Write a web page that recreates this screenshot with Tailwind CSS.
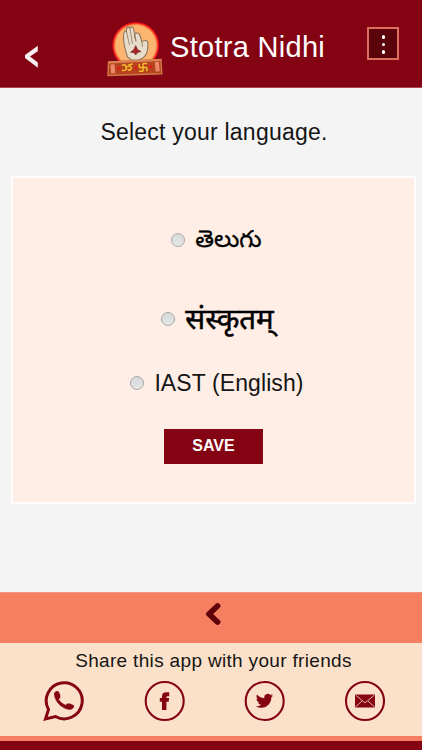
<!DOCTYPE html>
<html lang="en">
<head>
  <meta charset="UTF-8" />
  <meta name="viewport" content="width=device-width, initial-scale=1.0" />
  <title>Stotra Nidhi</title>
  <script src="https://cdn.jsdelivr.net/npm/@tailwindcss/browser@4"></script>
</head>
<body class="h-[750px] overflow-hidden flex flex-col bg-[#f4f4f4] text-[#151515] font-['Liberation_Sans',Arial,sans-serif]">

  <!-- HEADER -->
  <header class="h-[88px] shrink-0 flex items-start bg-[#850414] border-b border-[#a84a54]">
    <button class="mt-[45px] ml-[24px] w-[15px]" aria-label="Back">
      <svg class="block" width="15" height="23" viewBox="0 0 15 23"><path d="M13.8 .8V6.2L6 11.5L13.8 17.5V22.8L1 13V10Z" fill="#f6eff0" /></svg>
    </button>
    <!-- Logo -->
    <svg class="block mt-[20px] ml-[68px] shrink-0" width="58" height="58" viewBox="0 0 58 58">
      <defs>
        <radialGradient id="halo"><stop offset=".84" stop-color="#fbb56e" /><stop offset=".91" stop-color="#f8562f" /><stop offset=".96" stop-color="#ef0716" /><stop offset="1" stop-color="#850414" /></radialGradient>
      </defs>
      <circle cx="28.7" cy="25.5" r="23.8" fill="url(#halo)" />
      <g fill="#e8dccb" stroke="#8c765f" stroke-width="1.1" stroke-linejoin="round">
        <path d="M20.5 37C18.5 31 16.5 24 16.5 17C16.3 11 18.5 10 19.5 12C18.5 7 22 6 23 8.5C24 6 26.5 6.5 26.8 9.5L29 21L27.5 16C27.3 12.2 32 12.1 33 15.5L35 22C37 19.5 41 20 41 24L40.5 30C40 35 36 39.5 31 40L24.5 40Z" />
        <path d="M19.5 12L22.5 25M23 8.5L25.5 24M35 22L35.5 27" fill="none" stroke-width=".8" />
      </g>
      <path d="M28.7 25.5L30.5 29.5L34 31.5L30.5 32.6L28.7 35L27 32.7L23.5 32.3L27 29.4Z" fill="#ad2021" stroke="#6e3937" stroke-width=".7" />
      <path d="M1.5 42L54 39.5L54.8 53.8L1 55.5Z" fill="#b6421e" stroke="#d07a48" stroke-width="1.4" />
      <path d="M1.8 42.6L54 40.1" stroke="#d98355" stroke-width="2" />
      <path d="M3.5 44.4L7.5 44.2L8.3 53.2L4 53.4ZM47.8 42L51.8 41.8L52.8 51.2L48.7 51.4Z" fill="#ed8a6c" />
      <path d="M11.5 46.5l1.7 2-1.7 2-1.7-2zM29 46l1.7 2-1.7 2-1.7-2zM43.5 44.8l1.7 2-1.7 2-1.7-2z" fill="#df1717" />
      <g fill="none" stroke="#f5bc2b" stroke-width="1.5">
        <path d="M15 45.5Q19.5 43.5 18.8 47Q21 50.8 15 50.5M19 47.5Q23 44.5 24.5 48Q23 52 20.8 49M21.5 44.3Q23.5 45.7 25.5 43.5" />
        <path d="M36 43.5V51.5M32 47.6H40M32.3 43.7V47.5M36 43.6H40M39.8 47.5V51.3M36 51.3H32" />
      </g>
    </svg>
    <h1 class="mt-[31px] ml-[5px] text-[29px] leading-[32px] tracking-[0.3px] text-white whitespace-nowrap">Stotra Nidhi</h1>
    <button class="mt-[27px] ml-auto mr-[23px] w-[32px] h-[33px] border-2 border-[#df6f5d] bg-[#5b030b] flex flex-col items-center gap-[4px] pt-[6px] pl-px" aria-label="Menu">
      <span class="size-[3.6px] rounded-full bg-white"></span>
      <span class="size-[3.6px] rounded-full bg-white"></span>
      <span class="size-[3.6px] rounded-full bg-white"></span>
    </button>
  </header>

  <h2 class="mt-[31px] text-center text-[23px] leading-[26px] tracking-[0.22px] pl-[6px]">Select your language.</h2>

  <!-- LANGUAGE FORM -->
  <form class="mt-[31px] ml-[11px] mr-[6px] h-[328px] shrink-0 border-2 border-[#fffdfc] bg-[#ffeee6] flex flex-col items-center">
    <label class="mt-[42px] h-[40px] pl-[6px] flex items-center gap-[10px]">
      <span class="size-[14px] rounded-full border border-[#a9a9a9] bg-linear-to-b from-[#d6d9da] to-[#e6e7e7]"></span>
      <span class="pt-[5px] text-[24px] leading-[40px] text-black [-webkit-text-stroke:0.3px_black] font-['Noto_Sans_Telugu','Noto_Sans',sans-serif]">తెలుగు</span>
    </label>
    <label class="mt-[39px] h-[40px] pl-[8px] flex items-center gap-[10px]">
      <span class="size-[14px] rounded-full border border-[#a9a9a9] bg-linear-to-b from-[#d6d9da] to-[#e6e7e7]"></span>
      <span class="pt-[5px] text-[29.5px] leading-[40px] text-black [-webkit-text-stroke:0.5px_black] font-['Noto_Sans_Devanagari','Noto_Sans',sans-serif]">संस्कृतम्</span>
    </label>
    <label class="mt-[24px] h-[40px] pl-[7px] flex items-center gap-[10px]">
      <span class="size-[14px] rounded-full border border-[#a9a9a9] bg-linear-to-b from-[#d6d9da] to-[#e6e7e7]"></span>
      <span class="text-[23px] leading-[26px] tracking-[0.1px]">IAST (English)</span>
    </label>
    <button type="button" class="mt-[26px] w-[99px] h-[35px] pb-[2px] bg-[#850414] text-white text-[16px] leading-[20px] font-bold">SAVE</button>
  </form>

  <!-- FOOTER -->
  <footer class="mt-auto shrink-0">
    <div class="h-[51px] bg-[#f67f61] border-t border-[#ef967f] flex justify-center">
      <svg class="block mt-[9px] mr-[-4px]" width="18" height="24" viewBox="0 0 18 24"><path d="M13.5 4L5 12L13.5 20" fill="none" stroke="#600008" stroke-width="5.8" stroke-linecap="round" stroke-linejoin="round" /></svg>
    </div>
    <div class="h-[93px] bg-[#fce1ca]">
      <p class="pt-[7px] pl-[5px] text-center text-[19px] leading-[22px] tracking-[0.33px] whitespace-nowrap">Share this app with your friends</p>
      <div class="mt-[8px] pl-[43px] pr-[37px] flex justify-between text-[#850414]">
        <!-- WhatsApp -->
        <svg width="42" height="42" viewBox="0 0 42 42">
          <path d="M2.5 39L5.5 29.5A18 18 0 1 1 12.5 36.5Z" fill="none" stroke="currentColor" stroke-width="3" stroke-linejoin="miter" />
          <path d="M11.3 13.5Q12.5 10.5 15.3 11.5Q17.5 14.5 17 17.5L15.5 19.5Q18 23.5 22.5 25.2L24.5 23.8Q27.5 23.3 30.6 25.5Q31.4 27.5 28.6 29.1C22 31 11.5 23 11.3 13.5Z" fill="currentColor" stroke="currentColor" stroke-width=".6" />
        </svg>
        <!-- Facebook -->
        <svg width="42" height="42" viewBox="0 0 42 42">
          <circle cx="21.7" cy="21" r="19" fill="none" stroke="currentColor" stroke-width="2.1" />
          <path d="M19 30V21.8H16.8V18H19V16.5Q19 12.3 23.2 12.3H26.2V16.3H24.5Q23.4 16.3 23.4 17.4V18H26.1L25.7 21.8H23.4V30Z" fill="currentColor" />
        </svg>
        <!-- Twitter -->
        <svg width="42" height="42" viewBox="0 0 42 42">
          <circle cx="21.7" cy="21" r="19" fill="none" stroke="currentColor" stroke-width="2.1" />
          <path transform="translate(12.8 12.2) scale(.72)" d="M23.954 4.569a10 10 0 0 1-2.825.775 4.958 4.958 0 0 0 2.163-2.723c-.951.555-2.005.959-3.127 1.184a4.92 4.92 0 0 0-8.384 4.482C7.691 8.094 4.066 6.13 1.64 3.161a4.822 4.822 0 0 0-.666 2.475c0 1.71.87 3.213 2.188 4.096a4.904 4.904 0 0 1-2.228-.616v.061a4.923 4.923 0 0 0 3.946 4.827 4.996 4.996 0 0 1-2.212.085 4.937 4.937 0 0 0 4.604 3.417 9.868 9.868 0 0 1-6.102 2.105c-.39 0-.779-.023-1.17-.067a13.995 13.995 0 0 0 7.557 2.209c9.054 0 13.999-7.496 13.999-13.986 0-.209 0-.42-.015-.63a9.936 9.936 0 0 0 2.46-2.548z" fill="currentColor" />
        </svg>
        <!-- Mail -->
        <svg width="42" height="42" viewBox="0 0 42 42">
          <circle cx="22" cy="21" r="19" fill="none" stroke="currentColor" stroke-width="2.1" />
          <path d="M12 14.5H32V27.5H12Z" fill="currentColor" />
          <path d="M12.5 15L22 22.8L31.5 15M12.5 27L19 21M31.5 27L25 21" fill="none" stroke="#fce1ca" stroke-width=".8" />
        </svg>
      </div>
    </div>
    <div class="h-[5px] bg-[#f67f61]"></div>
    <div class="h-[9px] bg-[#850414]"></div>
  </footer>

</body>
</html>
